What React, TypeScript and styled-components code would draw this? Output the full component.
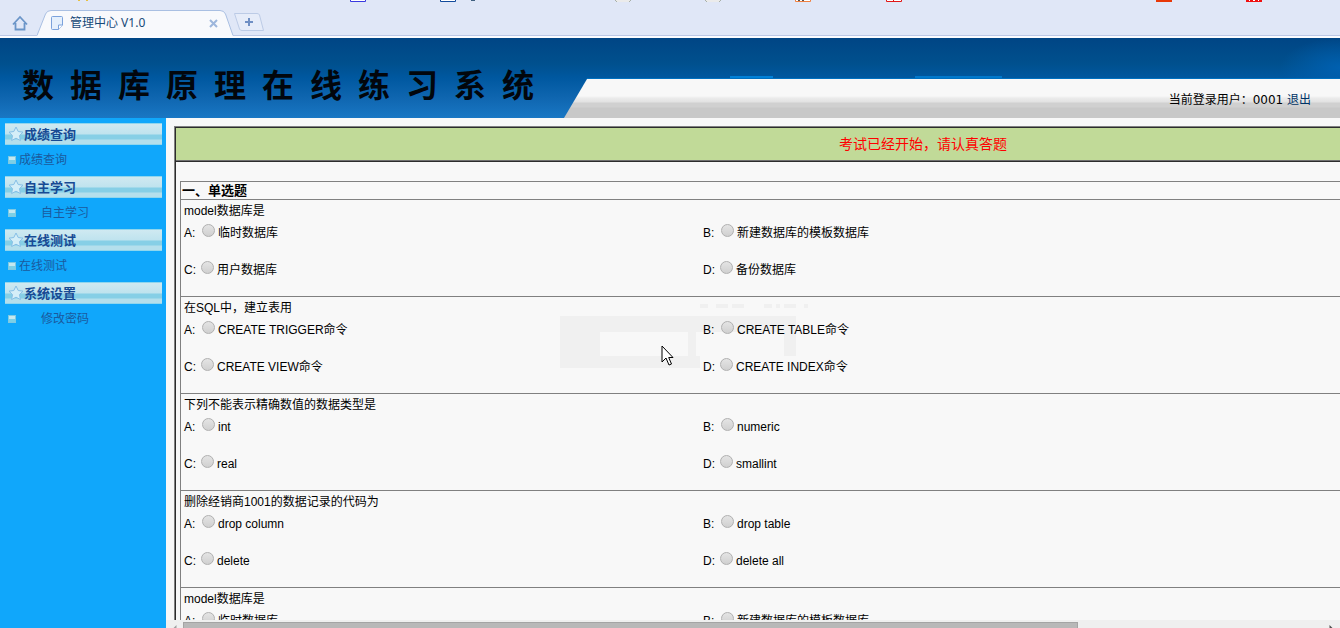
import React from 'react';
import styled, { createGlobalStyle } from 'styled-components';

const sans = '"Liberation Sans", "Noto Sans CJK SC", sans-serif';
const wide = '"DejaVu Sans", "Noto Sans CJK SC", sans-serif';
const ui = '"Noto Sans", "Noto Sans CJK SC", sans-serif';

const GlobalStyle = createGlobalStyle`
  * { box-sizing: border-box; }
  body { margin: 0; background: #f8f8f8; font: 12px/22px ${sans}; color: #000; overflow: hidden; }
  button { border: 0; padding: 0; background: none; font: inherit; color: inherit; }
  svg { display: block; }
`;

const Page = styled.div`
  display: flex;
  flex-direction: column;
  height: 100vh;
`;

/* Browser frame */
const Chrome = styled.div`
  flex: none;
  background: #e0e7f7;
  border-bottom: 2px solid #fbfcff;
`;

const Bookmarks = styled.div`
  display: flex;
  height: 2px;
  overflow: hidden;
`;

const Bookmark = styled.svg<{ $before: number }>`
  flex: none;
  width: 16px;
  height: 2px;
  margin-left: ${(p) => p.$before}px;
`;

const TabRow = styled.div`
  display: flex;
  align-items: flex-end;
  height: 34px;
  border-bottom: 1px solid #bcc8e6;
`;

const HomeButton = styled.button`
  width: 17px;
  height: 17px;
  margin: 0 8px 3px 12px;
`;

const Tab = styled.div`
  position: relative;
  display: flex;
  align-items: center;
  width: 197px;
  height: 26px;
  margin-bottom: -1px;
  padding: 0 16px 0 14px;
  color: #174a78;
  font-family: ${ui};
`;

const TabShape = styled.svg`
  position: absolute;
  inset: 0;
  z-index: 0;
`;

const TabIcon = styled.svg`
  position: relative;
  margin-right: 7px;
`;

const TabTitle = styled.span`
  position: relative;
  flex: 1;
`;

const TabClose = styled.button`
  position: relative;
`;

const NewTab = styled.button`
  margin-bottom: 3px;
`;

/* Site header */
const Header = styled.header`
  flex: none;
  display: flex;
  height: 80px;
  background:
    linear-gradient(#0080d8, #0080d8) 730px 38px / 43px 2px no-repeat,
    linear-gradient(#0078cc, #0078cc) 915px 38px / 87px 2px no-repeat,
    linear-gradient(#0070c0, #0070c0) 587px 40px / 100% 1px no-repeat,
    radial-gradient(60px 30px at 100% 30px, #0060b0, #0060b000),
    linear-gradient(#004585 0, #004c8a 15px, #00508e 26px, #0058a0 40px, #0f66b0 60px, #1977c4 80px);
`;

const SiteTitle = styled.h1`
  flex: none;
  width: 564px;
  margin: 0;
  padding: 24px 0 0 22px;
  font: bold 32px/48px "Liberation Serif", "Noto Sans CJK SC", serif;
  white-space: pre;
  color: #02060c;
`;

const UserBar = styled.div`
  flex: 1;
  align-self: flex-end;
  height: 39px;
  padding: 10px 29px 0 0;
  text-align: right;
  background: linear-gradient(#f8f8f8 17px, #ececec 19px, #e2e2e2 23px, #d0d0d0 24px, #d0d0d0 28px, #c8c8c8 29px);
  clip-path: polygon(23px 0, 100% 0, 100% 100%, 0 100%);
  font-family: ${wide};
`;

const Logout = styled.a`
  color: #003366;
  text-decoration: none;
`;

/* Body */
const Body = styled.div`
  flex: 1;
  display: flex;
  min-height: 0;
`;

const Sidebar = styled.nav`
  flex: none;
  width: 166px;
  padding: 5px 4px 0 5px;
  background: #10a7fb;
`;

const MenuHead = styled.h2`
  display: flex;
  align-items: center;
  height: 22px;
  margin: 0;
  padding-left: 3px;
  border: 1px solid #8fd6ee;
  border-width: 1px 0;
  background: linear-gradient(#cfe9f1 0, #bfe3ee 10px, #86cfe6 11px, #86cfe6 15px, #b4dfec 16px, #b4dfec 100%);
  color: #174a94;
  font-size: 13px;
  line-height: 20px;

  span { padding-top: 2px; }
`;

const MenuItem = styled.a<{ $indent?: boolean }>`
  display: flex;
  align-items: center;
  height: 30px;
  margin-bottom: 1px;
  padding-left: 3px;
  gap: ${(p) => (p.$indent ? 25 : 3)}px;
  color: #1b5a9e;
  text-decoration: none;
`;

const Bullet = styled.i`
  width: 8px;
  height: 8px;
  border: 1px solid #7fc9e2;
  background: linear-gradient(#c4e8f0 50%, #7cd0e6 50%);
`;

const Main = styled.main`
  flex: 1;
  position: relative;
  display: flex;
  flex-direction: column;
  min-width: 0;
  background: #f8f8f8;
`;

const Viewport = styled.div`
  flex: 1;
  min-height: 0;
  overflow: hidden;
  padding: 8px 0 0 8px;
`;

const Board = styled.div`
  min-width: 1498px;
  border: 1px solid #808080;
  box-shadow: inset 1px 1px #2c2c2c;
  padding: 1px 1px 4px;
`;

const Banner = styled.div`
  border-bottom: 1px solid #707070;
  box-shadow: 0 1px #2c2c2c;
  background: #c1da98;
  color: #f00;
  font-size: 14px;
  line-height: 32px;
  text-align: center;
`;

const Exam = styled.section`
  position: relative;
  margin: 20px 4px 0;
  border: 1px solid #808080;
`;

const ExamTitle = styled.h2`
  margin: 0;
  padding-left: 1px;
  font-size: 13px;
  line-height: 17px;
`;

const Question = styled.div`
  padding-left: 3px;
  border-top: 1px solid #808080;
`;

const Options = styled.div`
  display: grid;
  grid-template-columns: 519px 519px;
  grid-auto-rows: 37px;
`;

const Option = styled.label`
  display: flex;
  align-items: flex-start;
`;

const Letter = styled.span<{ $narrow: boolean }>`
  width: ${(p) => (p.$narrow ? 17 : 18)}px;
`;

const Radio = styled.input`
  appearance: none;
  width: 13px;
  height: 13px;
  margin: 2px 3px 0 0;
  border: 1px solid #b0b0b0;
  border-radius: 50%;
  background: linear-gradient(#e4e4e4, #d0d0d0);
`;

const Ghost = styled.svg`
  position: absolute;
  left: 394px;
  top: 186px;
`;

const Pointer = styled.svg`
  position: absolute;
  left: 495px;
  top: 227px;
`;

const ScrollBar = styled.div`
  flex: none;
  display: flex;
  height: 8px;
  background: #efefef;
  overflow: hidden;
`;

const ScrollButton = styled.button`
  flex: none;
  display: flex;
  justify-content: center;
  width: 17px;
  height: 17px;
  padding-top: 5px;
`;

const Track = styled.div`
  flex: 1;
  padding-top: 2px;
`;

const Thumb = styled.div`
  width: 78.5%;
  min-width: 40px;
  height: 12px;
  border: 1px solid #a4a4a4;
  background: #b8b8b8;
`;

const bookmarks: { before: number; art: React.ReactNode }[] = [
  { before: 76, art: <path d="M2 0h2v1H2zM10 0h2v1h-2z" fill="#e8c040" /> },
  { before: 258, art: <path d="M.5-1v2.500h15V-1" fill="#fff" stroke="#3a3ae0" /> },
  { before: 74, art: <path d="M.5-1v2.500h15V-1" fill="#fff" stroke="#124a9c" /> },
  { before: 14, art: <path d="M1 0h4v1H1z" fill="#406080" /> },
  { before: 129, art: <><path d="M0 0h16l-2 2H2z" fill="#ebebeb" /><path d="M0 0l2 2M16 0l-2 2" stroke="#a8b0a8" /></> },
  { before: 74, art: <><path d="M0 0h16l-2 2H2z" fill="#ebebeb" /><path d="M0 0l2 2M16 0l-2 2" stroke="#a8b0a8" /></> },
  { before: 74, art: <><path d="M.5-1v2.500h15V-1" fill="#fff" stroke="#f08040" /><path d="M3 0h2v1H3zM7 0h2v1H7z" fill="#555" /></> },
  { before: 75, art: <path d="M.5-1v2.500h15V-1M7.500 0v2" fill="#fff" stroke="#e01818" /> },
  { before: 254, art: <path d="M0 0h16v2H0z" fill="#e83808" /> },
  { before: 74, art: <><path d="M0 0h16v2H0z" fill="#f01010" /><path d="M3 0h1v1H3zM7 0h2v1H7zM12 0h1v1h-1z" fill="#fff" /></> },
];

const menu = [
  { head: '成绩查询', item: '成绩查询', indent: false },
  { head: '自主学习', item: '自主学习', indent: true },
  { head: '在线测试', item: '在线测试', indent: false },
  { head: '系统设置', item: '修改密码', indent: true },
];

const questions = [
  { text: 'model数据库是', options: ['临时数据库', '新建数据库的模板数据库', '用户数据库', '备份数据库'] },
  { text: '在SQL中，建立表用', options: ['CREATE TRIGGER命令', 'CREATE TABLE命令', 'CREATE VIEW命令', 'CREATE INDEX命令'] },
  { text: '下列不能表示精确数值的数据类型是', options: ['int', 'numeric', 'real', 'smallint'] },
  { text: '删除经销商1001的数据记录的代码为', options: ['drop column', 'drop table', 'delete', 'delete all'] },
  { text: 'model数据库是', options: ['临时数据库', '新建数据库的模板数据库'] },
];

const Star = () => (
  <svg width="16" height="16" viewBox="0 0 16 16">
    <path
      d="M8 1l2.200 4.500 4.800.7-3.500 3.400.9 4.900L8 12.200l-4.400 2.300.9-4.900L1 6.200l4.800-.7z"
      fill="#d4eef8" stroke="#86bfe6" strokeLinejoin="round"
    />
  </svg>
);

export default function App() {
  return (
    <Page>
      <GlobalStyle />
      <Chrome>
        <Bookmarks>
          {bookmarks.map((b, i) => (
            <Bookmark key={i} $before={b.before} viewBox="0 0 16 2">{b.art}</Bookmark>
          ))}
        </Bookmarks>
        <TabRow>
          <HomeButton aria-label="主页">
            <svg width="17" height="17" viewBox="0 0 17 17" fill="none" stroke="#6b95c8" strokeWidth="1.800">
              <path d="M1 9.500L8 2l7 7.500M3.500 8v6.500h9V8" />
            </svg>
          </HomeButton>
          <Tab>
            <TabShape width="197" height="26" viewBox="0 0 197 26">
              <path d="M0 25.500L8.500 4Q10 .5 14 .5H183Q187 .5 188.500 4L196 25.500V26H0z" fill="#f8f9fc" />
              <path d="M0 25.500L8.500 4Q10 .5 14 .5H183Q187 .5 188.500 4L196 25.500" fill="none" stroke="#a9bfe2" />
            </TabShape>
            <TabIcon width="12" height="14" viewBox="0 0 12 14">
              <path d="M1.500.5h9q1 0 1 1V9l-4 4.500h-6q-1 0-1-1v-11q0-1 1-1z" fill="#e4effc" stroke="#7ba2dc" />
              <path d="M11.500 9h-4v4.500" fill="#fff" stroke="#7ba2dc" />
            </TabIcon>
            <TabTitle>管理中心 V1.0</TabTitle>
            <TabClose aria-label="关闭">
              <svg width="9" height="9" viewBox="0 0 9 9">
                <path d="M1 1l7 7M8 1L1 8" stroke="#9db6dc" strokeWidth="2" />
              </svg>
            </TabClose>
          </Tab>
          <NewTab aria-label="新建标签页">
            <svg width="31" height="19" viewBox="0 0 31 19">
              <path d="M.5.500H23Q25 .5 25.500 2L29.500 17.500H8Q6 17.500 5.500 16z" fill="#e6ecf9" stroke="#bccbe6" />
              <path d="M15 5v8M11 9h8" stroke="#6f8fc4" strokeWidth="2" />
            </svg>
          </NewTab>
        </TabRow>
      </Chrome>

      <Header>
        <SiteTitle>{'数据库原理在线练习系统'.split('').join('  ')}</SiteTitle>
        <UserBar>当前登录用户：0001 <Logout href="#">退出</Logout></UserBar>
      </Header>

      <Body>
        <Sidebar>
          {menu.map((m) => (
            <React.Fragment key={m.head}>
              <MenuHead><Star /><span>{m.head}</span></MenuHead>
              <MenuItem href="#" $indent={m.indent}><Bullet />{m.item}</MenuItem>
            </React.Fragment>
          ))}
        </Sidebar>
        <Main>
          <Ghost width="250" height="66" viewBox="0 0 250 66" fill="#f0f0f0">
            <path fillRule="evenodd" d="M0 12h236v40h-96v12H0zM40 28v24h88V28zM136 28v24h88V28z" />
            <path d="M140 0h8v4h-8zM156 0h12v4h-12zM172 0h12v4h-12zM204 0h8v4h-8zM216 0h4v4h-4zM224 0h12v4h-12zM244 0h4v4h-4z" />
          </Ghost>
          <Viewport>
            <Board>
              <Banner>考试已经开始，请认真答题</Banner>
              <Exam>
                <ExamTitle>一、单选题</ExamTitle>
                {questions.map((q, i) => (
                  <Question key={i} role="radiogroup" aria-labelledby={`q${i}`}>
                    <div id={`q${i}`}>{q.text}</div>
                    <Options>
                      {q.options.map((o, n) => (
                        <Option key={o}>
                          <Letter $narrow={n > 1}>{'ABCD'[n]}:</Letter>
                          <Radio type="radio" name={`question-${i}`} />
                          {o}
                        </Option>
                      ))}
                    </Options>
                  </Question>
                ))}
              </Exam>
            </Board>
          </Viewport>
          <ScrollBar>
            <ScrollButton aria-label="向左滚动">
              <svg width="5" height="8" viewBox="0 0 5 8"><path d="M4.500 0v8L.5 4z" fill="#a0a0a0" /></svg>
            </ScrollButton>
            <Track><Thumb /></Track>
            <ScrollButton aria-label="向右滚动">
              <svg width="5" height="8" viewBox="0 0 5 8"><path d="M.5 0v8l4-4z" fill="#505050" /></svg>
            </ScrollButton>
          </ScrollBar>
          <Pointer width="14" height="22" viewBox="0 0 14 22">
            <path d="M1 1v16l4-4 3 7 2.500-1L7.700 12.500H12z" fill="#fff" stroke="#000" />
          </Pointer>
        </Main>
      </Body>
    </Page>
  );
}
